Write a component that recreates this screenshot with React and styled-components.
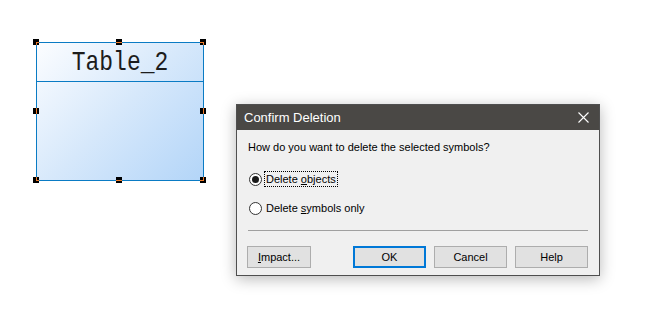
import React, { useState } from 'react';
import styled, { createGlobalStyle } from 'styled-components';

const GlobalStyle = createGlobalStyle`
    html, body {
        margin: 0;
        padding: 0;
        background: #ffffff;
    }
    * {
        box-sizing: border-box;
    }
`

const uiFont = `"Liberation Sans", Arial, sans-serif`

const Canvas = styled.div`
    position: relative;
    width: 651px;
    height: 321px;
    background: #ffffff;
    overflow: hidden;
`

// diagram symbol //

const Node = styled.div`
    position: absolute;
    left: ${({x}) => x}px;
    top: ${({y}) => y}px;
    width: ${({w}) => w}px;
    height: ${({h}) => h}px;
`

const NodeBox = styled.div`
    width: 100%;
    height: 100%;
    display: flex;
    flex-direction: column;
    border: 1px solid #0a7bc4;
    background: linear-gradient(135deg, #fcfdff 0%, #d6e8fb 50%, #b3d5f8 100%);
`

const NodeTitle = styled.div`
    height: 39px;
    flex-shrink: 0;
    display: flex;
    align-items: center;
    justify-content: center;
    border-bottom: 1px solid #0a7bc4;

    font-family: "Liberation Mono", "DejaVu Sans Mono", monospace;
    font-size: 23px;
    color: #1c1c1c;
`

const NodeTitleText = styled.span`
    display: inline-block;
    transform: scaleY(1.22);
    margin-top: 2px;
`

const Handle = styled.div`
    position: absolute;
    width: 6px;
    height: 6px;
    left: ${({cx}) => cx - 3}px;
    top: ${({cy}) => cy - 3}px;
    background: #000000;

    &::before {
        content: '';
        position: absolute;
        display: ${({h}) => h ? 'block' : 'none'};
        top: 3px;
        height: 1px;
        left: ${({h}) => h ? h[0] : 0}px;
        width: ${({h}) => h ? h[1] - h[0] : 0}px;
        background: #f07c2a;
    }

    &::after {
        content: '';
        position: absolute;
        display: ${({v}) => v ? 'block' : 'none'};
        left: 3px;
        width: 1px;
        top: ${({v}) => v ? v[0] : 0}px;
        height: ${({v}) => v ? v[1] - v[0] : 0}px;
        background: #f07c2a;
    }
`

// dialog //

const Dialog = styled.div`
    position: absolute;
    left: 236px;
    top: 104px;
    width: 364px;
    height: 172px;
    display: flex;
    flex-direction: column;
    background: #f0f0f0;
    border: 1px solid #4f4f4f;
    box-shadow: 0 3px 14px rgba(0, 0, 0, 0.28);
    font-family: ${uiFont};
    color: #000000;
`

const TitleBar = styled.div`
    height: 25px;
    flex-shrink: 0;
    display: flex;
    align-items: center;
    justify-content: space-between;
    padding: 0 9px 0 7px;
    background: #4a4845;
    color: #ffffff;
    font-size: 13px;
`

const CloseButton = styled.button`
    width: 14px;
    height: 14px;
    padding: 0;
    border: none;
    background: transparent;
    display: flex;
    align-items: center;
    justify-content: center;
    cursor: pointer;
`

const Body = styled.div`
    flex: 1;
    display: flex;
    flex-direction: column;
    padding: 10px 10px 0 10px;
    font-size: 11px;
`

const Question = styled.div`
    line-height: 15px;
    padding-left: 1px;
`

const RadioGroup = styled.div`
    display: flex;
    flex-direction: column;
    gap: 15px;
    margin-top: 17px;
    padding-left: 2px;
`

const RadioRow = styled.label`
    display: flex;
    align-items: center;
    height: 14px;
    cursor: default;
`

const RadioCircle = styled.span`
    width: 13px;
    height: 13px;
    flex-shrink: 0;
    border-radius: 50%;
    border: 1px solid #333333;
    background: #ffffff;
    display: flex;
    align-items: center;
    justify-content: center;
    margin-right: 2px;

    &::after {
        content: '';
        width: 7px;
        height: 7px;
        border-radius: 50%;
        background: #1a1a1a;
        display: ${({checked}) => checked ? 'block' : 'none'};
    }
`

const RadioLabel = styled.span`
    line-height: 14px;
    padding: 0 1px;
    border: 1px dotted ${({focused}) => focused ? '#000000' : 'transparent'};
`

const Separator = styled.div`
    height: 1px;
    margin: 15px 1px 0 1px;
    background: #a0a0a0;
`

const ButtonRow = styled.div`
    display: flex;
    justify-content: space-between;
    margin-top: 15px;
    padding-right: 1px;
`

const ButtonGroup = styled.div`
    display: flex;
    gap: 8px;
`

const Button = styled.button`
    height: 22px;
    width: ${({w}) => w}px;
    padding: 0;
    font-family: ${uiFont};
    font-size: 11px;
    color: #000000;
    background: #e1e1e1;
    border: ${({primary}) => primary ? '2px solid #0078d7' : '1px solid #adadad'};
    border-radius: 0;
    cursor: pointer;

    &:hover {
        background: #e5f1fb;
    }
`

const handles = [
    { cx: 0, cy: 0, h: [3, 6], v: [3, 6] },
    { cx: 83, cy: 0, h: [0, 6] },
    { cx: 167, cy: 0, h: [0, 4], v: [3, 6] },
    { cx: 0, cy: 69, v: [0, 6] },
    { cx: 167, cy: 69, v: [0, 6] },
    { cx: 0, cy: 138, h: [3, 6], v: [0, 4] },
    { cx: 83, cy: 138, h: [0, 6] },
    { cx: 167, cy: 138, h: [0, 4], v: [0, 4] },
]

const App = () => {
    const [mode, setMode] = useState('objects')

    return (
        <>
            <GlobalStyle />
            <Canvas>
                <Node x={36} y={42} w={168} h={139}>
                    <NodeBox>
                        <NodeTitle>
                            <NodeTitleText>Table_2</NodeTitleText>
                        </NodeTitle>
                    </NodeBox>
                    {handles.map((p, i) => (
                        <Handle key={i} cx={p.cx} cy={p.cy} h={p.h} v={p.v} />
                    ))}
                </Node>

                <Dialog>
                    <TitleBar>
                        <span>Confirm Deletion</span>
                        <CloseButton>
                            <svg width="11" height="11" viewBox="0 0 11 11">
                                <path d="M0.5 0.5 L10.5 10.5 M10.5 0.5 L0.5 10.5" stroke="#ffffff" strokeWidth="1.1" fill="none" />
                            </svg>
                        </CloseButton>
                    </TitleBar>
                    <Body>
                        <Question>How do you want to delete the selected symbols?</Question>
                        <RadioGroup>
                            <RadioRow onClick={() => setMode('objects')}>
                                <RadioCircle checked={mode === 'objects'} />
                                <RadioLabel focused={mode === 'objects'}>Delete <u>o</u>bjects</RadioLabel>
                            </RadioRow>
                            <RadioRow onClick={() => setMode('symbols')}>
                                <RadioCircle checked={mode === 'symbols'} />
                                <RadioLabel focused={mode === 'symbols'}>Delete <u>s</u>ymbols only</RadioLabel>
                            </RadioRow>
                        </RadioGroup>
                        <Separator />
                        <ButtonRow>
                            <Button w={64}><u>I</u>mpact...</Button>
                            <ButtonGroup>
                                <Button w={73} primary>OK</Button>
                                <Button w={73}>Cancel</Button>
                                <Button w={73}>Help</Button>
                            </ButtonGroup>
                        </ButtonRow>
                    </Body>
                </Dialog>
            </Canvas>
        </>
    )
}

export default App
